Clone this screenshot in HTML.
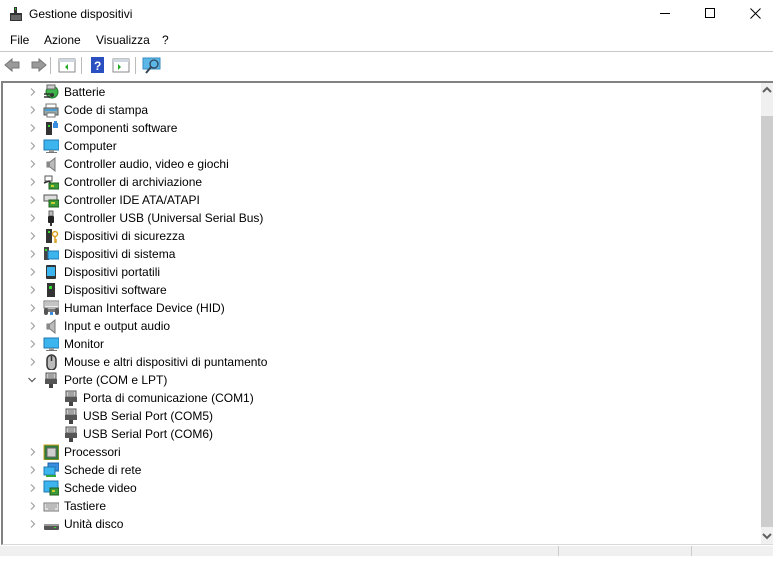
<!DOCTYPE html>
<html><head><meta charset="utf-8"><style>
*{margin:0;padding:0;box-sizing:border-box}
body{width:780px;height:564px;background:#fff;font-family:"Liberation Sans",Arial,sans-serif;font-size:12px;color:#000;position:relative;overflow:hidden}
.abs{position:absolute}
.menu span{position:absolute;top:33px;font-size:12px}
.tree{position:absolute;left:1px;top:81px;width:772px;height:464px;border-left:2px solid #828282;border-top:2px solid #828282;border-bottom:1px solid #d9d9d9;overflow:hidden}
.row{position:absolute;height:18px;line-height:18px;white-space:nowrap}
.row .t{position:absolute;top:0}
.chev{position:absolute;top:5px;width:8px;height:8px}
.ic{position:absolute;top:1px;width:16px;height:16px}
</style></head><body>
<svg class="abs" style="left:9px;top:6px" width="14" height="16" viewBox="0 0 14 16"><rect x="5" y="1" width="3" height="6" fill="#333"/><rect x="6" y="2" width="1" height="2" fill="#3c3"/><rect x="1" y="7" width="12" height="8" fill="#333"/><rect x="2" y="9" width="10" height="5" fill="#666"/></svg>
<div class="abs" style="left:29px;top:7px;font-size:12px">Gestione dispositivi</div>
<div class="abs" style="left:660px;top:13px;width:10px;height:1px;background:#000"></div>
<div class="abs" style="left:705px;top:8px;width:10px;height:10px;border:1px solid #000"></div>
<svg class="abs" style="left:750px;top:8px" width="11" height="11"><path d="M0.5 0.5L10.5 10.5M10.5 0.5L0.5 10.5" stroke="#000" stroke-width="1"/></svg>
<div class="menu"><span style="left:10px">File</span><span style="left:44px">Azione</span><span style="left:96px">Visualizza</span><span style="left:162px">?</span></div>
<div class="abs" style="left:0;top:51px;width:773px;height:1px;background:#c8c8c8"></div>
<svg class="abs" style="left:4px;top:56px" width="160" height="20" viewBox="0 0 160 20">
<path d="M1 9L8 3V6H15V12H8V15Z" fill="#9a9a9a" stroke="#777"/>
<path d="M42 9L35 3V6H28V12H35V15Z" fill="#9a9a9a" stroke="#777"/>
<rect x="46" y="1" width="1" height="17" fill="#bbb"/>
<rect x="55" y="3" width="16" height="13" fill="#fff" stroke="#888"/><rect x="55" y="3" width="16" height="3" fill="#cfd8e0"/><path d="M64 8V14L61 11Z" fill="#2a2"/>
<rect x="77" y="1" width="1" height="17" fill="#bbb"/>
<rect x="87" y="1" width="13" height="16" fill="#2a4fc0"/><text x="90" y="14" fill="#fff" font-size="12" font-weight="bold" font-family="Liberation Sans">?</text>
<rect x="109" y="3" width="16" height="13" fill="#fff" stroke="#888"/><rect x="109" y="3" width="16" height="3" fill="#cfd8e0"/><path d="M114 8V14L117 11Z" fill="#2a2"/>
<rect x="131" y="1" width="1" height="17" fill="#bbb"/>
<rect x="139" y="2" width="17" height="11" fill="#5ab7e8" stroke="#3a8ec0"/><circle cx="150" cy="8" r="4" fill="none" stroke="#345" stroke-width="1.3"/><path d="M147 11L142 17" stroke="#345" stroke-width="2"/>
</svg>
<div class="tree">
<div id="rows"></div>
</div>
<div class="abs" style="left:761px;top:83px;width:12px;height:461px;background:#f0f0f0"></div>
<div class="abs" style="left:761px;top:116px;width:12px;height:411px;background:#cdcdcd"></div>
<svg class="abs" style="left:761px;top:86px" width="12" height="8"><path d="M2 6L6 2L10 6" stroke="#606060" stroke-width="2" fill="none"/></svg>
<svg class="abs" style="left:761px;top:532px" width="12" height="8"><path d="M2 2L6 6L10 2" stroke="#606060" stroke-width="2" fill="none"/></svg>
<div class="abs" style="left:0;top:546px;width:773px;height:10px;background:#f0f0f0"></div>
<div class="abs" style="left:558px;top:546px;width:1px;height:10px;background:#ccc"></div>
<div class="abs" style="left:691px;top:546px;width:1px;height:10px;background:#ccc"></div>
<script>
var I={
bat:'<circle cx="9" cy="8" r="6" fill="#3db34a" stroke="#1f7a2a"/><rect x="4" y="1" width="8" height="4" fill="#ccc" stroke="#666"/><path d="M1 10H7M1 13H7" stroke="#333" stroke-width="1.5"/><circle cx="9" cy="11" r="2" fill="#333"/>',
prn:'<rect x="3" y="2" width="10" height="5" fill="#fff" stroke="#777"/><rect x="1" y="6" width="14" height="7" fill="#9aa" stroke="#555"/><rect x="2" y="7" width="12" height="2" fill="#4a9ed8"/><rect x="4" y="11" width="8" height="4" fill="#fff" stroke="#777"/>',
comp:'<rect x="3" y="2" width="6" height="13" fill="#333"/><rect x="5" y="5" width="2" height="2" fill="#3d3"/><rect x="10" y="3" width="5" height="5" fill="#3a8ee0"/><rect x="11" y="1" width="3" height="3" fill="#3a8ee0"/>',
mon:'<rect x="1" y="2" width="15" height="10" fill="#3cb4ee" stroke="#1f78b0"/><rect x="6" y="12" width="5" height="2" fill="#999"/><rect x="3" y="14" width="11" height="1" fill="#777"/>',
spk:'<path d="M4 6H7L12 2V15L7 11H4Z" fill="#bbb" stroke="#777"/><rect x="4" y="6" width="3" height="5" fill="#888"/>',
sto:'<rect x="2" y="2" width="7" height="5" fill="#fff" stroke="#555"/><path d="M1 9L6 7L9 11" stroke="#333" fill="none" stroke-width="1.5"/><rect x="6" y="9" width="10" height="6" fill="#3a9a3a" stroke="#1e5e1e"/><rect x="8" y="11" width="3" height="2" fill="#cc3"/>',
ide:'<rect x="1" y="3" width="13" height="6" fill="#ddd" stroke="#555"/><rect x="6" y="8" width="10" height="7" fill="#3a9a3a" stroke="#1e5e1e"/><rect x="8" y="10" width="4" height="2" fill="#cc3"/>',
usb:'<rect x="6" y="1" width="4" height="5" fill="#bbb" stroke="#666"/><rect x="5" y="6" width="6" height="7" rx="1" fill="#222"/><rect x="7" y="13" width="2" height="3" fill="#333"/>',
sec:'<rect x="3" y="1" width="6" height="14" fill="#333"/><rect x="5" y="3" width="2" height="2" fill="#3d3"/><circle cx="12" cy="6" r="2.5" fill="none" stroke="#d8a020" stroke-width="1.5"/><path d="M12 8V15M12 12H14M12 14H14" stroke="#d8a020" stroke-width="1.5"/>',
sys:'<rect x="1" y="1" width="5" height="13" fill="#444"/><rect x="2" y="3" width="2" height="2" fill="#3d3"/><rect x="5" y="5" width="11" height="8" fill="#3cb4ee" stroke="#1f78b0"/>',
prt:'<rect x="3" y="1" width="10" height="14" rx="1" fill="#333"/><rect x="4" y="3" width="8" height="9" fill="#3cb4ee"/>',
swd:'<rect x="4" y="1" width="8" height="14" fill="#333"/><rect x="6" y="4" width="3" height="3" fill="#3d3"/>',
hid:'<rect x="1" y="1" width="15" height="7" fill="#eee" stroke="#777"/><path d="M2 3H15M2 5H15" stroke="#999"/><rect x="1" y="8" width="4" height="7" rx="2" fill="#555"/><rect x="12" y="8" width="4" height="7" rx="2" fill="#555"/><rect x="5" y="9" width="7" height="3" fill="#777"/><rect x="7" y="12" width="3" height="3" fill="#3a8ee0"/>',
mou:'<rect x="4" y="1" width="9" height="15" rx="4.5" fill="#bbb" stroke="#333" stroke-width="1.5"/><path d="M8.5 2V7" stroke="#333" stroke-width="1.5"/>',
port:'<rect x="3" y="1" width="10" height="6" fill="#ccc" stroke="#555"/><path d="M5 3H11M5 5H11" stroke="#777"/><rect x="2" y="7" width="12" height="5" fill="#555"/><rect x="6" y="12" width="4" height="4" fill="#444"/>',
cpu:'<rect x="1" y="1" width="15" height="15" fill="#2d7d3a" stroke="#c9a020"/><rect x="4" y="4" width="9" height="9" fill="#cfcfcf" stroke="#666"/>',
net:'<rect x="5" y="1" width="11" height="8" fill="#3a8ee0" stroke="#1f5fa0"/><rect x="1" y="5" width="11" height="8" fill="#3cb4ee" stroke="#1f78b0"/><rect x="3" y="13" width="10" height="2" fill="#3a3"/>',
vid:'<rect x="1" y="1" width="14" height="11" fill="#3cb4ee" stroke="#1f78b0"/><rect x="7" y="8" width="9" height="7" fill="#3a9a3a" stroke="#1e5e1e"/><rect x="9" y="10" width="3" height="2" fill="#cc3"/>',
kbd:'<rect x="1" y="5" width="15" height="8" fill="#ddd" stroke="#777"/><path d="M3 7H14M3 9H14M5 11H12" stroke="#999"/>',
dsk:'<rect x="1" y="8" width="15" height="6" rx="1" fill="#555"/><rect x="1" y="8" width="15" height="2" fill="#999"/><rect x="11" y="11" width="2" height="1" fill="#3d3"/>'
};
var R=[['Batterie','bat'],['Code di stampa','prn'],['Componenti software','comp'],['Computer','mon'],['Controller audio, video e giochi','spk'],['Controller di archiviazione','sto'],['Controller IDE ATA/ATAPI','ide'],['Controller USB (Universal Serial Bus)','usb'],['Dispositivi di sicurezza','sec'],['Dispositivi di sistema','sys'],['Dispositivi portatili','prt'],['Dispositivi software','swd'],['Human Interface Device (HID)','hid'],['Input e output audio','spk'],['Monitor','mon'],['Mouse e altri dispositivi di puntamento','mou'],['Porte (COM e LPT)','port',2],['Porta di comunicazione (COM1)','port',1],['USB Serial Port (COM5)','port',1],['USB Serial Port (COM6)','port',1],['Processori','cpu'],['Schede di rete','net'],['Schede video','vid'],['Tastiere','kbd'],['Unità disco','dsk']];
var h='';
R.forEach(function(r,i){
 var top=i*18, ch=r[2]===1, ix=ch?60:40, tx=ch?80:61;
 h+='<div class="row" style="left:0;top:'+top+'px;width:760px">';
 if(!ch){
  if(r[2]===2) h+='<svg class="chev" style="left:25px" viewBox="0 0 8 8"><path d="M0.5 2L4 5.5L7.5 2" stroke="#555" fill="none" stroke-width="1.2"/></svg>';
  else h+='<svg class="chev" style="left:26px" viewBox="0 0 8 8"><path d="M2 0.5L5.5 4L2 7.5" stroke="#a0a0a0" fill="none" stroke-width="1.2"/></svg>';
 }
 h+='<svg class="ic" style="left:'+ix+'px" viewBox="0 0 16 16">'+I[r[1]]+'</svg><span class="t" style="left:'+tx+'px">'+r[0]+'</span></div>';
});
document.getElementById('rows').innerHTML=h;
</script>
</body></html>
